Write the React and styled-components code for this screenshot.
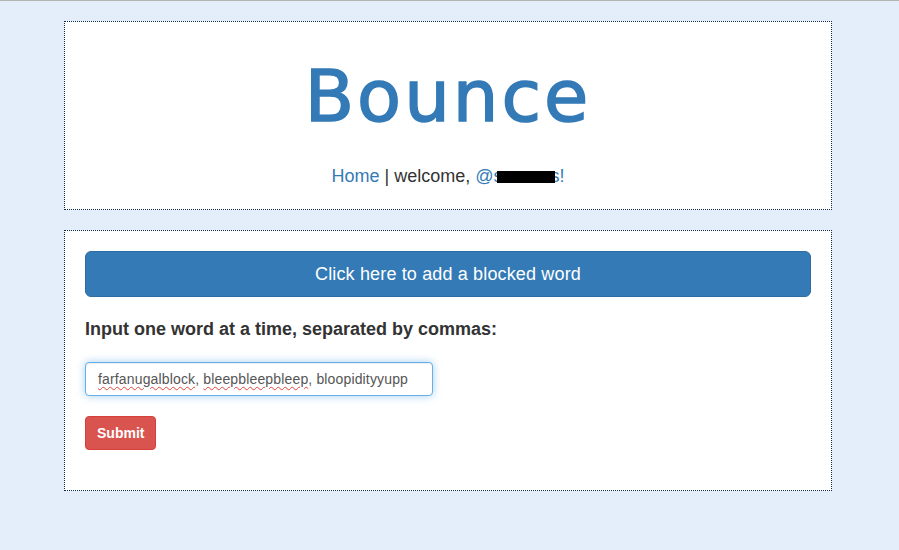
import React from 'react';
import styled, { createGlobalStyle } from 'styled-components';

const GlobalStyle = createGlobalStyle`
  html, body {
    margin: 0;
    padding: 0;
    background-color: #e3eefa;
  }
  body {
    font-family: "Liberation Sans", Arial, sans-serif;
    color: #333;
  }
`;

const Page = styled.div`
  min-height: 100vh;
  box-sizing: border-box;
  border-top: 1px solid #b4b4b4;
  padding: 20px 3px 0 0;
  background-color: #e3eefa;
`;

const Wrapper = styled.div`
  width: 768px;
  margin: 0 auto;
  display: flex;
  flex-direction: column;
  gap: 20px;
`;

const Panel = styled.div`
  box-sizing: border-box;
  background: #fff;
  border: 1px dotted #0a2a4a;
  padding: ${(p) => p.$pad};
`;

const Header = styled(Panel)`
  text-align: center;
`;

const Title = styled.h1`
  margin: 0;
  font-family: "DejaVu Sans", "Liberation Sans", sans-serif;
  font-weight: normal;
  font-size: 72px;
  line-height: 72px;
  letter-spacing: 3px;
  color: #337ab7;
  -webkit-text-stroke: 1.6px #337ab7;
`;

const Nav = styled.div`
  margin-top: 32px;
  font-size: 18px;
  line-height: 24px;
  color: #333;
`;

const Link = styled.a`
  color: #337ab7;
  text-decoration: none;
`;

const Redacted = styled.span`
  display: inline-block;
  width: 58px;
  height: 12px;
  margin: 0 -4px 0 -6px;
  background: #000;
  vertical-align: -1px;
  position: relative;
`;

const BigButton = styled.button`
  display: block;
  width: 100%;
  box-sizing: border-box;
  font-family: "Liberation Sans", Arial, sans-serif;
  font-size: 18px;
  line-height: 24px;
  padding: 10px 16px;
  color: #fff;
  background: #337ab7;
  border: 1px solid #2e6da4;
  border-radius: 6px;
  letter-spacing: 0.15px;
  cursor: pointer;
`;

const Label = styled.label`
  display: block;
  margin-top: 20px;
  font-size: 18px;
  line-height: 24px;
  font-weight: bold;
  color: #333;
`;

const Field = styled.div`
  margin-top: 21px;
  width: 348px;
  height: 34px;
  box-sizing: border-box;
  padding: 6px 12px;
  font-size: 14px;
  line-height: 20px;
  letter-spacing: 0.15px;
  color: #555;
  background: #fff;
  border: 1px solid #66afe9;
  border-radius: 4px;
  box-shadow: inset 0 1px 1px rgba(0, 0, 0, 0.075), 0 0 8px rgba(102, 175, 233, 0.6);
  white-space: nowrap;
`;

const Misspelled = styled.span`
  text-decoration: underline wavy #e0443a;
  text-decoration-thickness: 1px;
  text-underline-offset: 2px;
`;

const SubmitButton = styled.button`
  display: block;
  margin-top: 20px;
  height: 34px;
  padding: 6px 11px;
  font-family: "Liberation Sans", Arial, sans-serif;
  font-size: 14px;
  font-weight: bold;
  line-height: 20px;
  color: #fff;
  background: #d9534f;
  border: 1px solid #d43f3a;
  border-radius: 4px;
  cursor: pointer;
`;

const App = () => {
  return (
    <>
      <GlobalStyle />
      <Page>
        <Wrapper>
          <Header $pad="38px 20px 21px">
            <Title>Bounce</Title>
            <Nav>
              <Link href="#">Home</Link> | welcome, <Link href="#">@s<Redacted />s!</Link>
            </Nav>
          </Header>
          <Panel $pad="20px 20px 40px">
            <BigButton type="button">Click here to add a blocked word</BigButton>
            <form onSubmit={(e) => e.preventDefault()}>
              <Label>Input one word at a time, separated by commas:</Label>
              <Field>
                <Misspelled>farfanugalblock</Misspelled>, <Misspelled>bleepbleepbleep</Misspelled>, bloopidityyupp
              </Field>
              <SubmitButton type="submit">Submit</SubmitButton>
            </form>
          </Panel>
        </Wrapper>
      </Page>
    </>
  );
};

export default App;
